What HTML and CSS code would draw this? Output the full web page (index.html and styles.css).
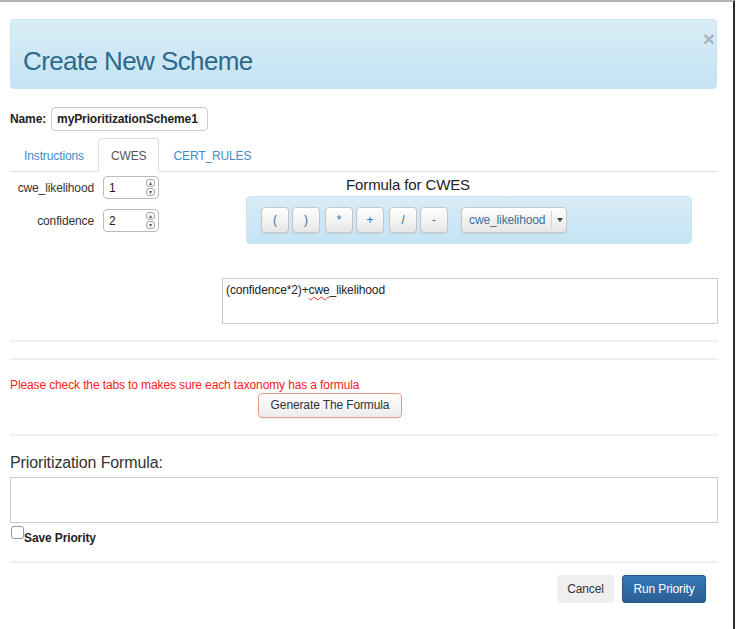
FILE: index.html
```html
<!DOCTYPE html>
<html>
<head>
<meta charset="utf-8">
<link rel="stylesheet" href="styles.css">
</head>
<body>
<div class="modal">
  <div class="header">
    <h1 class="title">Create New Scheme</h1>
    <span class="close">×</span>
  </div>

  <div class="name-row">
    <label class="name-label">Name:</label>
    <div class="name-input">myPrioritizationScheme1</div>
  </div>

  <ul class="tabs">
    <li class="tab">Instructions</li>
    <li class="tab active">CWES</li>
    <li class="tab">CERT_RULES</li>
  </ul>

  <div class="tab-body">
    <div class="fields">
      <div class="field">
        <span class="field-label">cwe_likelihood</span>
        <div class="spinner"><span class="spin-val">1</span><span class="spin-btns"><i>▴</i><i>▾</i></span></div>
      </div>
      <div class="field">
        <span class="field-label">confidence</span>
        <div class="spinner"><span class="spin-val">2</span><span class="spin-btns"><i>▴</i><i>▾</i></span></div>
      </div>
    </div>
    <div class="formula">
      <div class="formula-title">Formula for CWES</div>
      <div class="op-box">
        <div class="op-group">
          <span class="op">(</span><span class="op">)</span>
        </div>
        <div class="op-group">
          <span class="op">*</span><span class="op">+</span>
        </div>
        <div class="op-group">
          <span class="op">/</span><span class="op">-</span>
        </div>
        <div class="dropdown"><span class="dd-text">cwe_likelihood</span><span class="dd-caret"></span></div>
      </div>
    </div>
  </div>

  <div class="formula-area">(confidence*2)+<span class="squiggle">cwe</span>_likelihood</div>

  <hr class="rule r1">
  <hr class="rule r2">

  <p class="warn">Please check the tabs to makes sure each taxonomy has a formula</p>
  <div class="gen-row"><span class="btn-gen">Generate The Formula</span></div>

  <hr class="rule r3">

  <h2 class="prio-title">Prioritization Formula:</h2>
  <div class="prio-area"></div>
  <div class="save-row"><span class="checkbox"></span><span class="save-label">Save Priority</span></div>

  <hr class="rule r4">

  <div class="footer">
    <span class="btn-cancel">Cancel</span>
    <span class="btn-run">Run Priority</span>
  </div>
</div>
</body>
</html>
```
FILE: styles.css
```css
* { box-sizing: border-box; }
html, body { margin: 0; padding: 0; background: #fff; }
body {
  font-family: "Liberation Sans", Arial, sans-serif;
  font-size: 12px;
  letter-spacing: -0.12px;
  color: #333;
  width: 736px;
  height: 629px;
  overflow: hidden;
}
.modal {
  width: 735px;
  height: 629px;
  border-top: 2px solid #b4b4b4;
  border-right: 2px solid #2a2a2a;
  padding: 17px 16px 0 10px;
}
.header {
  position: relative;
  height: 70px;
  border-radius: 4px;
  background: linear-gradient(#d9edf7, #c4e3f3);
  border: 1px solid #c9e4f1;
  padding: 0 0 0 12px;
}
.title {
  margin: 0;
  font-weight: normal;
  font-size: 26px;
  line-height: 26px;
  padding-top: 28px;
  color: #2c6a8c;
  letter-spacing: -0.6px;
}
.close {
  position: absolute;
  right: 1px;
  top: 9px;
  font-size: 21px;
  font-weight: bold;
  color: #a9b4b9;
  line-height: 20px;
}
.name-row {
  display: flex;
  align-items: center;
  margin-top: 18px;
  height: 24px;
}
.name-label {
  font-weight: bold;
  font-size: 12px;
  color: #222;
  margin-right: 5px;
}
.name-input {
  width: 157px;
  height: 24px;
  border: 1px solid #ccc;
  border-radius: 4px;
  font-weight: bold;
  font-size: 12px;
  line-height: 22px;
  padding-left: 5px;
  color: #222;
  box-shadow: inset 0 1px 1px rgba(0,0,0,.06);
}
.tabs {
  list-style: none;
  margin: 7px 0 0 0;
  padding: 0;
  display: flex;
  height: 34px;
  border-bottom: 1px solid #ddd;
}
.tab {
  padding: 0 13px;
  line-height: 34px;
  font-size: 12px;
  color: #428bca;
  border: 1px solid transparent;
  border-radius: 4px 4px 0 0;
}
.tab.active {
  color: #555;
  border-color: #ddd;
  border-bottom-color: #fff;
  background: #fff;
  height: 34px;
  padding: 0 12px;
}
.tab-body {
  display: flex;
}
.fields {
  width: 150px;
  padding-top: 4px;
}
.field {
  display: flex;
  align-items: center;
  height: 23px;
  margin-bottom: 10px;
}
.field-label {
  width: 84px;
  text-align: right;
  font-size: 12px;
  color: #333;
  margin-right: 9px;
}
.spinner {
  width: 56px;
  height: 23px;
  border: 1px solid #bbb;
  border-radius: 4px;
  display: flex;
  align-items: center;
  justify-content: space-between;
  padding: 0 3px 0 5px;
  font-size: 12px;
  color: #222;
}
.spin-btns {
  display: flex;
  flex-direction: column;
  gap: 1px;
}
.spin-btns i {
  font-style: normal;
  display: block;
  width: 9px;
  height: 8px;
  border: 1px solid #aaa;
  border-radius: 3px;
  font-size: 6px;
  line-height: 6px;
  text-align: center;
  color: #555;
  background: #f7f7f7;
}
.formula {
  width: 496px;
}
.formula-title {
  text-align: center;
  font-size: 15px;
  color: #222;
  height: 19px;
  line-height: 19px;
  margin-top: 3px;
}
.op-box {
  margin: 2px 0 0 86px;
  width: 446px;
  height: 48px;
  border-radius: 4px;
  background: linear-gradient(#d9edf7, #c4e3f3);
  border: 1px solid #c9e4f1;
  display: flex;
  align-items: center;
  padding-left: 14px;
}
.op-group {
  display: flex;
  gap: 3px;
  margin-right: 5px;
}
.op {
  width: 28px;
  height: 26px;
  border: 1px solid #c6c6c6;
  border-radius: 4px;
  background: linear-gradient(#fff, #e6e6e6);
  text-align: center;
  line-height: 24px;
  font-size: 12px;
  color: #3a6e96;
  box-shadow: 0 1px 1px rgba(0,0,0,.08);
}
.dropdown {
  margin-left: 8px;
  width: 106px;
  height: 26px;
  border: 1px solid #c6c6c6;
  border-radius: 4px;
  background: linear-gradient(#fff, #e6e6e6);
  display: flex;
  align-items: center;
  font-size: 12px;
  color: #3a6e96;
  box-shadow: 0 1px 1px rgba(0,0,0,.08);
}
.dd-text {
  padding: 0 6px 0 7px;
  border-right: 1px solid #d6d6d6;
  line-height: 18px;
}
.dd-caret {
  margin-left: 5px;
  width: 0;
  height: 0;
  border-left: 3px solid transparent;
  border-right: 3px solid transparent;
  border-top: 4px solid #444;
}
.formula-area {
  margin: 34px 0 0 212px;
  width: 496px;
  height: 46px;
  border: 1px solid #ccc;
  padding: 4px 3px;
  font-size: 12px;
  color: #222;
  line-height: 14px;
}
.squiggle {
  text-decoration: underline wavy #e33;
  text-decoration-thickness: 1px;
  text-underline-offset: 2px;
}
.rule {
  margin: 0;
  border: 0;
  border-top: 2px solid #efefef;
  width: 708px;
  height: 0;
}
.r1 { margin-top: 16px; }
.r2 { margin-top: 16px; }
.warn {
  margin: 18px 0 0 0;
  color: #ff1a1a;
  font-size: 12px;
  line-height: 15px;
}
.gen-row {
  margin-top: 0;
  padding-left: 248px;
  height: 25px;
}
.btn-gen {
  display: inline-block;
  width: 144px;
  height: 25px;
  border: 1px solid #e59a85;
  border-radius: 4px;
  background: linear-gradient(#fff, #ececec);
  text-align: center;
  line-height: 23px;
  font-size: 12px;
  color: #333;
  box-shadow: 0 1px 1px rgba(0,0,0,.06);
}
.r3 { margin-top: 16px; }
.prio-title {
  margin: 18px 0 0 0;
  font-weight: normal;
  font-size: 16px;
  line-height: 18px;
  color: #333;
}
.prio-area {
  margin-top: 5px;
  width: 708px;
  height: 46px;
  border: 1px solid #ccc;
}
.save-row {
  display: flex;
  align-items: flex-start;
  margin-top: 3px;
}
.checkbox {
  display: inline-block;
  width: 13px;
  height: 13px;
  border: 1px solid #999;
  border-radius: 3px;
  background: #fff;
  margin-left: 1px;
}
.save-label {
  font-weight: bold;
  font-size: 12px;
  line-height: 14px;
  color: #222;
  margin-top: 5px;
}
.r4 { margin-top: 16px; }
.footer {
  display: flex;
  justify-content: flex-end;
  gap: 8px;
  margin-top: 12px;
  padding-right: 11px;
}
.btn-cancel {
  width: 57px;
  height: 28px;
  background: #efefef;
  border-radius: 3px;
  text-align: center;
  line-height: 28px;
  font-size: 12px;
  color: #333;
}
.btn-run {
  width: 84px;
  height: 28px;
  border-radius: 3px;
  border: 1px solid #265a8a;
  background: linear-gradient(#3779b6, #2a5f95);
  text-align: center;
  line-height: 26px;
  font-size: 12px;
  color: #fff;
}
```
